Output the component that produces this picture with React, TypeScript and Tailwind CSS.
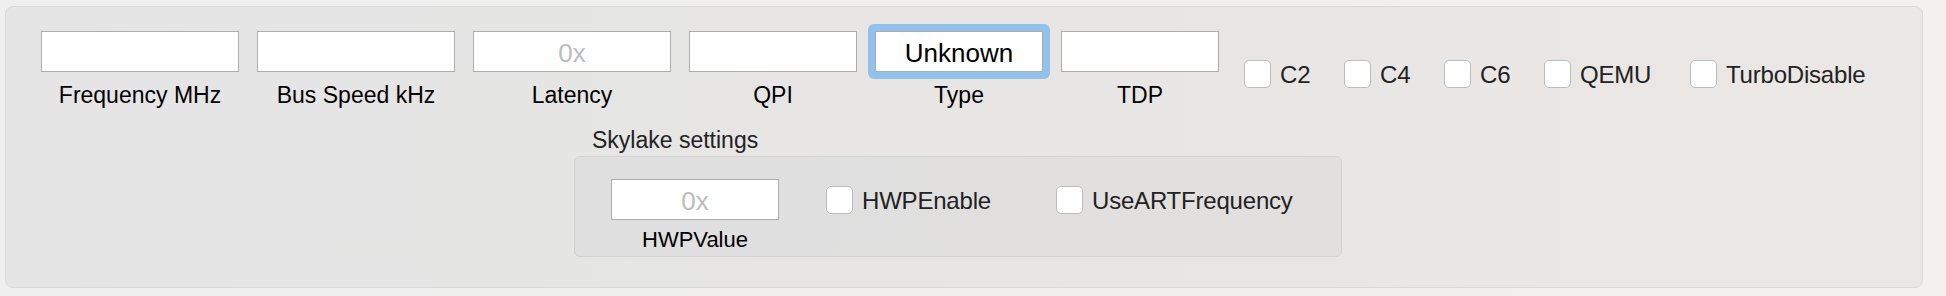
const font = "font-['Liberation_Sans',Arial,sans-serif]";

type FieldProps = {
  label: string;
  width: string;
  value?: string;
  placeholder?: string;
  focused?: boolean;
};

function Field({ label, width, value, placeholder, focused }: FieldProps) {
  return (
    <div className={`flex flex-col ${width}`}>
      <div className="relative h-[41px]">
        {focused && (
          <span className="absolute -inset-[7px] rounded-[6px] bg-[#92c1ee]" />
        )}
        <div className="relative h-full border border-[#adadad] bg-white flex items-center justify-center pt-[4px] text-[26px] text-black">
          {value ?? <span className="text-[#bdbdbd]">{placeholder}</span>}
        </div>
      </div>
      <div className="mt-[10px] text-center text-[23px] text-black leading-[1.15]">
        {label}
      </div>
    </div>
  );
}

function Check({ label, width }: { label: string; width: string }) {
  return (
    <div className={`flex items-center ${width}`}>
      <span className="w-[27px] h-[28px] shrink-0 rounded-[5px] border border-[#bcbcbc] bg-white" />
      <span className="ml-[9px] pt-[1px] text-[24px] text-[#222] leading-[1.15] tracking-[-0.2px]">
        {label}
      </span>
    </div>
  );
}

export default function App() {
  return (
    <div
      className={`${font} w-[1946px] h-[296px] bg-gradient-to-r from-[#efefef] via-[#f0efee] to-[#f4f0ed] pt-[6px] pl-[5px]`}
    >
      <div className="w-[1918px] h-[282px] rounded-[8px] border border-[#d9d9d9] bg-gradient-to-r from-[#e5e5e5] via-[#e7e6e5] to-[#ebe7e4] pl-[35px] pt-[24px]">
        <div className="flex items-start">
          <div className="flex gap-[18px]">
            <Field label="Frequency MHz" width="w-[198px]" />
            <Field label="Bus Speed kHz" width="w-[198px]" />
            <Field label="Latency" width="w-[198px]" placeholder="0x" />
            <Field label="QPI" width="w-[168px]" />
            <Field label="Type" width="w-[168px]" value="Unknown" focused />
            <Field label="TDP" width="w-[158px]" />
          </div>
          <div className="flex ml-[25px] mt-[29px]">
            <Check label="C2" width="w-[100px]" />
            <Check label="C4" width="w-[100px]" />
            <Check label="C6" width="w-[100px]" />
            <Check label="QEMU" width="w-[146px]" />
            <Check label="TurboDisable" width="w-[200px]" />
          </div>
        </div>

        <div className="ml-[533px] mt-[19px] w-[768px]">
          <div className="pl-[18px] text-[23px] text-[#222] leading-[1.15]">
            Skylake settings
          </div>
          <div className="mt-[2px] h-[101px] rounded-[6px] border border-[#d3d3d3] bg-gradient-to-r from-[#dfdfdf] to-[#e2e0df] pl-[36px] pt-[22px] flex items-start">
            <div className="flex flex-col w-[168px]">
              <div className="h-[41px] border border-[#adadad] bg-white flex items-center justify-center pt-[4px] text-[26px] text-[#bdbdbd]">
                0x
              </div>
              <div className="mt-[7px] text-center text-[22px] text-black leading-[1.15]">
                HWPValue
              </div>
            </div>
            <div className="flex ml-[47px] mt-[7px]">
              <Check label="HWPEnable" width="w-[230px]" />
              <Check label="UseARTFrequency" width="w-[240px]" />
            </div>
          </div>
        </div>
      </div>
    </div>
  );
}
